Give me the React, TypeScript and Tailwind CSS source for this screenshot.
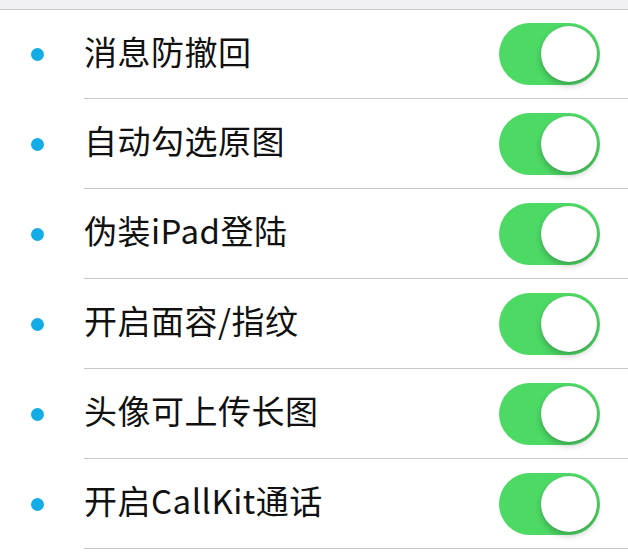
import React from 'react';

const items = ['消息防撤回', '自动勾选原图', '伪装iPad登陆', '开启面容/指纹', '头像可上传长图', '开启CallKit通话'];

function Toggle() {
  return (
    <div className="relative h-[62px] w-[101px] rounded-full bg-[#4cd964]">
      <div className="absolute right-[3px] top-[3px] h-[56px] w-[56px] rounded-full bg-white shadow-[0_4px_6px_rgba(0,0,0,0.22),0_0_1px_rgba(0,0,0,0.2)]" />
    </div>
  );
}

export default function App() {
  return (
    <div className="min-h-[556px] w-[628px] bg-white" style={{ fontFamily: '"Noto Sans CJK SC", "Liberation Sans", sans-serif' }}>
      <div className="h-[10px] border-b border-[#c8c7cc] bg-[#efeff4]" />
      {items.map((label, i) => (
        <div key={label} className="flex items-stretch">
          <div className="flex w-[84px] shrink-0 items-center justify-center pr-[10px]">
            <span className="block h-[13px] w-[13px] rounded-full bg-[#14ace6]" />
          </div>
          <div className={`flex flex-1 items-center justify-between border-b border-[#c8c7cc] pr-[28px] ${i === 0 ? 'h-[89px]' : 'h-[90px]'}`}>
            <span className="pb-[6px] text-[33px] leading-none tracking-[0.5px] text-[#111]">{label}</span>
            <Toggle />
          </div>
        </div>
      ))}
    </div>
  );
}
